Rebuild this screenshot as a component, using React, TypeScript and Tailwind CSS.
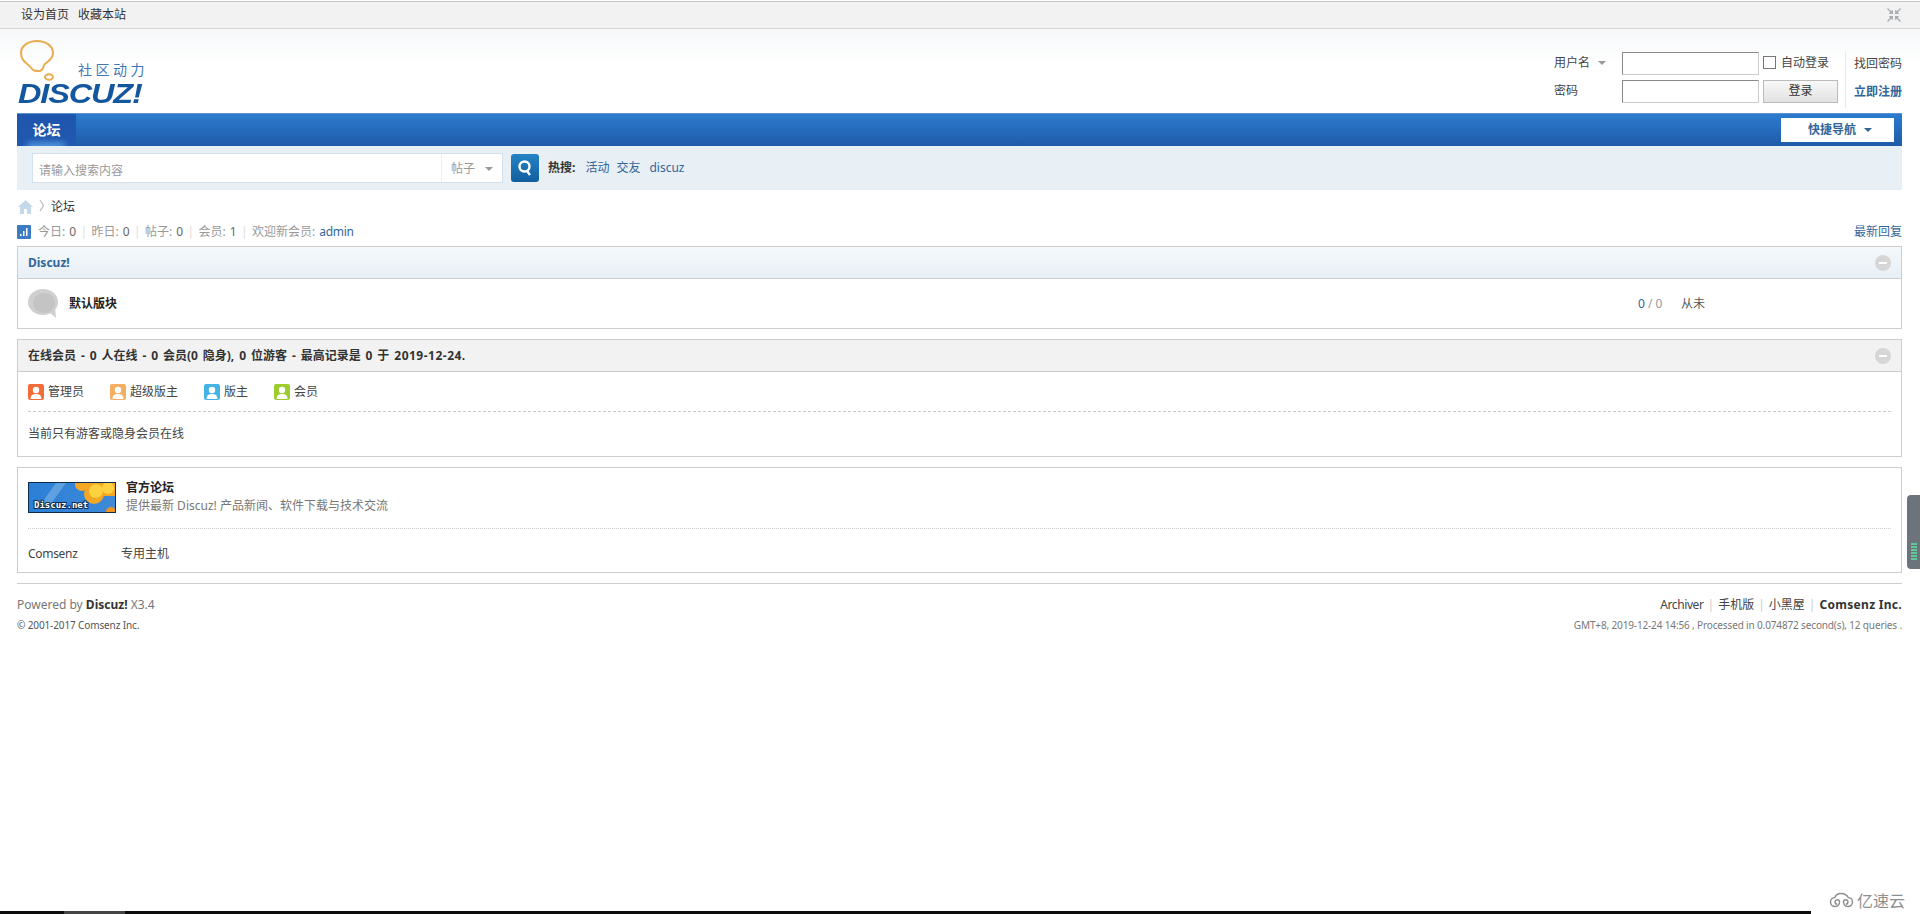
import type { ReactNode } from "react";

const ui = "font-['Noto_Sans','Noto_Sans_CJK_SC',sans-serif]";

function Caret({ className = "border-t-[#999]" }: { className?: string }) {
  return <span className={`inline-block w-0 h-0 border-x-[4px] border-x-transparent border-t-[4px] ${className}`} />;
}

function CollapseIcon() {
  return (
    <span className="flex items-center justify-center w-4 h-4 rounded-full bg-[#d6d6d6]">
      <span className="w-2 h-[2px] bg-white" />
    </span>
  );
}

function Logo() {
  return (
    <div className="relative w-[130px] h-[75px]">
      <svg width="40" height="46" viewBox="0 0 40 46" className="absolute left-[2px] top-0">
        <path
          d="M13 30c-2-5-11-6-11-16C2 7 9 2 18 2c9 0 16 5 16 12 0 7-7 9-9 12-1 3-1 6-5 6-3 0-6 0-7-2z"
          fill="none"
          stroke="#e9ac4e"
          strokeWidth="2"
        />
        <ellipse cx="30" cy="38" rx="4" ry="2.8" fill="none" stroke="#e9ac4e" strokeWidth="2" />
      </svg>
      <span className="absolute left-[61px] top-[22px] whitespace-nowrap text-[14px] leading-[16px] tracking-[3.5px] text-[#3f78b5] font-['Noto_Sans_CJK_SC',sans-serif]">
        社区动力
      </span>
      <span className="absolute left-px top-[41px] origin-left scale-x-[1.16] text-[28px] leading-[28px] font-bold italic tracking-[-1px] text-[#13589f] font-['Liberation_Sans',sans-serif]">
        DISCUZ!
      </span>
    </div>
  );
}

function LoginForm() {
  const input = "w-[137px] h-[23px] bg-white border border-[#ccc] border-t-[#8a8a8a] border-l-[#8a8a8a]";
  return (
    <div className="flex pt-[23px] text-[12px] leading-[21px] text-[#444]">
      <div className="grid grid-cols-[67px_137px_75px] grid-rows-[23px_23px] gap-x-[4px] gap-y-[5px] -ml-1">
        <div className="flex items-center gap-2 -ml-px -mr-1 h-[21px]">
          用户名 <Caret />
        </div>
        <div className={`${input} -ml-1`} />
        <div className="flex items-center gap-[5px] -ml-1 h-[21px] whitespace-nowrap">
          <span className="w-[13px] h-[13px] border border-[#777] bg-white" />
          自动登录
        </div>
        <div className="-ml-px -mr-1 h-[21px]">密码</div>
        <div className={`${input} -ml-1`} />
        <div className="-ml-1 w-[75px] h-[23px] border border-[#bbb] bg-gradient-to-b from-[#f8f8f8] to-[#e2e2e2] text-center leading-[19px] text-[#333]">
          登录
        </div>
      </div>
      <div className="ml-[3px] border-l border-[#e8e8e8] pl-[8px] h-[56px] flex flex-col gap-[5px] leading-[23px]">
        <span className="whitespace-nowrap">找回密码</span>
        <span className="font-bold text-[#369] whitespace-nowrap">立即注册</span>
      </div>
    </div>
  );
}

function NavBar() {
  return (
    <div className="flex items-center justify-between h-[33px] bg-gradient-to-b from-[#2c7bd0] to-[#1f5ca8] border-t border-[#5c93cc]">
      <div className="relative w-[59px] h-full pb-[2px] bg-gradient-to-b from-[#1f55ac] to-[#2259b0] flex items-center justify-center text-[14px] font-bold text-white overflow-hidden">
        论坛
        <span className="absolute -bottom-[3px] left-[10px] w-[38px] h-[6px] rounded-full bg-[#5aa7ec] blur-[3px]" />
      </div>
      <div className="flex items-center gap-[8px] w-[113px] h-[24px] mr-[8px] pl-[27px] bg-white text-[12px] font-bold text-[#369]">
        <span>快捷导航</span>
        <Caret className="border-t-[#369]" />
      </div>
    </div>
  );
}

function SearchBar() {
  return (
    <div className="flex items-center h-[44px] pl-[15px] bg-[#e8eff5] text-[12px]">
      <div className="flex w-[471px] h-[30px] bg-white border border-[#d4e0ea]">
        <span className="flex-1 pl-[6px] pt-[3px] leading-[28px] text-[#999]">请输入搜索内容</span>
        <span className="flex items-center gap-[10px] w-[61px] pl-[9px] pt-[2px] border-l border-[#eaeff3] text-[#999]">
          帖子 <Caret />
        </span>
      </div>
      <div className="flex items-center justify-center ml-[8px] w-[28px] h-[28px] rounded-[3px] bg-gradient-to-b from-[#2483c5] to-[#105f9f]">
        <svg width="16" height="18" viewBox="0 0 16 18" fill="none" stroke="white" strokeWidth="2.4">
          <circle cx="7.5" cy="7.5" r="5" />
          <path d="M10 12l3 4" />
        </svg>
      </div>
      <strong className="ml-[9px] text-[#333]">热搜:</strong>
      <span className="ml-[10px] text-[#369]">活动</span>
      <span className="ml-[7px] text-[#369]">交友</span>
      <span className="ml-[9px] text-[#369]">discuz</span>
    </div>
  );
}

function Breadcrumb() {
  return (
    <div className="flex items-center h-[16px] mt-[9px] text-[12px] text-[#333]">
      <svg width="15" height="14" viewBox="0 0 15 14" className="ml-px">
        <path d="M7.5 0L15 7h-2v7H9V9H6v5H2V7H0z" fill="#c3d9ea" />
      </svg>
      <span className="ml-[6px] w-[12px] text-[#aaa]">〉</span>
      <span>论坛</span>
    </div>
  );
}

function Stats() {
  const sep = <span className="mx-[4.4px] text-[#ddd]">|</span>;
  return (
    <div className="flex items-center justify-between h-[16px] mt-[9px] text-[12px] text-[#999]">
      <div className="flex items-center">
        <svg width="14" height="14" viewBox="0 0 14 14" className="mr-[7px]">
          <rect width="14" height="14" rx="1" fill="#3c7cc4" />
          <path d="M3 9h1.5v2H3zM6 6h1.5v5H6zM9 3h1.5v8H9z" fill="#fff" />
        </svg>
        今日: <em className="not-italic text-[#666] ml-1">0</em>
        {sep}昨日: <em className="not-italic text-[#666] ml-1">0</em>
        {sep}帖子: <em className="not-italic text-[#666] ml-1">0</em>
        {sep}会员: <em className="not-italic text-[#666] ml-1">1</em>
        {sep}欢迎新会员: <span className="text-[#369] ml-1 tracking-[-0.3px]">admin</span>
      </div>
      <span className="text-[#369]">最新回复</span>
    </div>
  );
}

function Panel({ title, titleClass, headClass, children }: { title: ReactNode; titleClass: string; headClass: string; children: ReactNode }) {
  return (
    <section className="border border-[#cdcdcd]">
      <div className={`flex items-center justify-between h-[32px] pl-[10px] pr-[10px] border-b border-[#cdcdcd] text-[12px] font-bold ${headClass} ${titleClass}`}>
        <span>{title}</span>
        <CollapseIcon />
      </div>
      {children}
    </section>
  );
}

function Bubble() {
  return (
    <svg width="32" height="29" viewBox="0 0 32 29">
      <ellipse cx="15" cy="13" rx="15" ry="13" fill="#cfcfcf" />
      <path d="M20 22l8 7-1-11z" fill="#cfcfcf" />
      <ellipse cx="16" cy="14" rx="11" ry="10" fill="#c4c4c4" />
    </svg>
  );
}

function UserIcon({ bg }: { bg: string }) {
  return (
    <span className={`block w-4 h-4 rounded-[2px] ${bg}`}>
      <svg width="16" height="16" viewBox="0 0 16 16">
        <circle cx="8" cy="6" r="3.2" fill="#fff" />
        <path d="M2.5 15c0-4 2.5-5 5.5-5s5.5 1 5.5 5z" fill="#fff" />
      </svg>
    </span>
  );
}

const legend = [
  { label: "管理员", bg: "bg-[#f26c38]", width: "w-[82px]" },
  { label: "超级版主", bg: "bg-[#f3ae62]", width: "w-[94px]" },
  { label: "版主", bg: "bg-[#45b3e4]", width: "w-[70px]" },
  { label: "会员", bg: "bg-[#9ccc2e]", width: "w-[70px]" },
];

function ForumBanner() {
  return (
    <svg width="88" height="31" viewBox="0 0 88 31" className="block shrink-0">
      <defs>
        <linearGradient id="sky" x1="0" y1="0" x2="1" y2="0">
          <stop offset="0" stopColor="#2b7fd6" />
          <stop offset="1" stopColor="#3f8ad8" />
        </linearGradient>
      </defs>
      <rect width="88" height="31" fill="url(#sky)" />
      <path d="M10 26L28 1h10L20 26z" fill="#7fb4e6" opacity="0.6" />
      <g fill="#f5a623">
        <circle cx="54" cy="2" r="7" />
        <circle cx="66" cy="12" r="10" />
        <circle cx="80" cy="4" r="9" />
        <rect x="60" y="0" width="28" height="14" />
      </g>
      <g fill="#fdd23e">
        <circle cx="68" cy="9" r="7" />
        <circle cx="80" cy="6" r="6" />
      </g>
      <circle cx="83" cy="30" r="5" fill="#ee9420" />
      <rect x="0.5" y="0.5" width="87" height="30" fill="none" stroke="#0c2c4f" />
      <text x="6" y="26" fontSize="9" fontWeight="700" fill="#fff" stroke="#0c2c4f" strokeWidth="2" paintOrder="stroke" fontFamily="DejaVu Sans Mono, monospace">
        Discuz.net
      </text>
    </svg>
  );
}

function FooterInfo() {
  const sep = <span className="mx-[4px] text-[#ccc]">|</span>;
  return (
    <footer className="flex justify-between mt-[10px] pt-[13px] border-t border-[#cdcdcd]">
      <div>
        <p className="text-[12px] leading-[16px] text-[#777]">
          Powered by <strong className="text-[#333]">Discuz!</strong> X3.4
        </p>
        <p className="mt-[6px] text-[10px] leading-[12px] tracking-[-0.12px] text-[#555]">© 2001-2017 Comsenz Inc.</p>
      </div>
      <div className="text-right">
        <p className="text-[12px] leading-[16px] text-[#444]">
          <span className="tracking-[-0.4px]">Archiver</span>{sep}手机版{sep}小黑屋{sep}
          <strong className="text-[#333] tracking-[0.3px]">Comsenz Inc.</strong>
        </p>
        <p className="mt-[6px] text-[10px] leading-[12px] tracking-[-0.14px] text-[#777]">
          GMT+8, 2019-12-24 14:56 , Processed in 0.074872 second(s), 12 queries .
        </p>
      </div>
    </footer>
  );
}

export default function App() {
  return (
    <div className={`relative h-[914px] overflow-hidden bg-white ${ui}`}>
      {/* top strip */}
      <div className="flex items-center justify-between h-[28px] pl-[21px] pr-[19px] bg-[#f2f2f2] border-t border-b border-t-[#c4c4c4] border-b-[#d6d6d6] mt-px text-[12px] text-[#333]">
        <div className="flex gap-[9px]">
          <span>设为首页</span>
          <span>收藏本站</span>
        </div>
        <svg width="14" height="14" viewBox="0 0 14 14" fill="#aab0b2">
          <path d="M0 1l1-1 3 3 2-1v4H2l1-2zM14 1l-1-1-3 3-2-1v4h4l-1-2zM0 13l1 1 3-3 2 1V8H2l1 2zM14 13l-1 1-3-3-2 1V8h4l-1 2z" />
        </svg>
      </div>

      <div className="bg-gradient-to-b from-[#f5f7f9] to-white to-[40%] px-[17px] pr-[18px]">
        <header className="flex justify-between h-[84px]">
          <div className="pt-[10px]">
            <Logo />
          </div>
          <LoginForm />
        </header>
      </div>

      <main className="px-[17px] pr-[18px]">
        <NavBar />
        <SearchBar />
        <Breadcrumb />
        <Stats />

        <div className="mt-[6px]">
          <Panel title="Discuz!" titleClass="text-[#369]" headClass="bg-gradient-to-b from-[#f4f9fc] to-[#e8eff5]">
            <div className="flex items-center h-[49px] pl-[10px]">
              <Bubble />
              <strong className="ml-[9px] flex-1 text-[12px] text-[#222]">默认版块</strong>
              <span className="w-[43px] text-[12px] text-[#999]">
                <span className="text-[#369]">0</span> / 0
              </span>
              <span className="w-[220px] text-[12px] text-[#555]">从未</span>
            </div>
          </Panel>
        </div>

        <div className="mt-[10px]">
          <Panel
            title={
              <span className="[word-spacing:1.8px]">
                在线会员 - 0 人在线 - 0 会员(0 隐身), 0 位游客 - 最高记录是 0 于 <span className="tracking-[0.5px]">2019-12-24.</span>
              </span>
            }
            titleClass="text-[#333]"
            headClass="bg-[#f2f2f2]"
          >
            <div className="px-[10px] text-[12px] text-[#444]">
              <div className="flex items-center h-[40px] pt-px border-b border-dashed border-[#ccc]">
                {legend.map((item) => (
                  <span key={item.label} className={`flex items-center gap-[4px] ${item.width}`}>
                    <UserIcon bg={item.bg} />
                    {item.label}
                  </span>
                ))}
              </div>
              <p className="leading-[44px]">当前只有游客或隐身会员在线</p>
            </div>
          </Panel>
        </div>

        <section className="mt-[10px] h-[106px] border border-[#cdcdcd] px-[10px] pt-[14px] text-[12px]">
          <div className="flex gap-[10px] h-[47px] border-b border-dotted border-[#ccc]">
            <ForumBanner />
            <div className="-mt-[3px] leading-[18px]">
              <strong className="block text-[#222]">官方论坛</strong>
              <span className="text-[#777]">提供最新 Discuz! 产品新闻、软件下载与技术交流</span>
            </div>
          </div>
          <div className="flex h-[50px] items-center text-[#444]">
            <span className="w-[93px] tracking-[-0.3px]">Comsenz</span>
            <span>专用主机</span>
          </div>
        </section>

        <FooterInfo />
      </main>

      {/* side handle pinned to the window edge */}
      <div className="absolute right-0 top-[495px] flex flex-col justify-end items-center gap-px w-[13px] h-[74px] pb-[9px] rounded-l-[4px] bg-[#6d737b]">
        {[0, 1, 2, 3, 4, 5].map((i) => (
          <span key={i} className="w-[6px] h-[2px] bg-[#5fc79a]" />
        ))}
      </div>

      {/* watermark */}
      <div className="absolute right-[15px] bottom-[4px] flex items-center gap-[3px] text-[16px] leading-[20px] text-[#8f8f8f] font-['Noto_Sans_CJK_SC',sans-serif]">
        <svg width="25" height="16" viewBox="0 0 25 16" fill="none" stroke="#8f8f8f" strokeWidth="1.5">
          <path d="M6 5.500a4.500 4.500 0 1 0 4.500 4.500 2.200 2.200 0 1 0-2.200 2.200" />
          <path d="M19 5.500a4.500 4.500 0 1 1-4.500 4.500 2.200 2.200 0 1 1 2.200 2.200" />
          <path d="M6 5.500C7 0 17 0 19 5.500" />
        </svg>
        亿速云
      </div>

      {/* window strip along the bottom */}
      <div className="absolute left-0 bottom-0 w-[1811px] h-[3px] bg-[#0c0c0c]">
        <div className="absolute left-[64px] w-[61px] h-full bg-[#454545]" />
      </div>
    </div>
  );
}
